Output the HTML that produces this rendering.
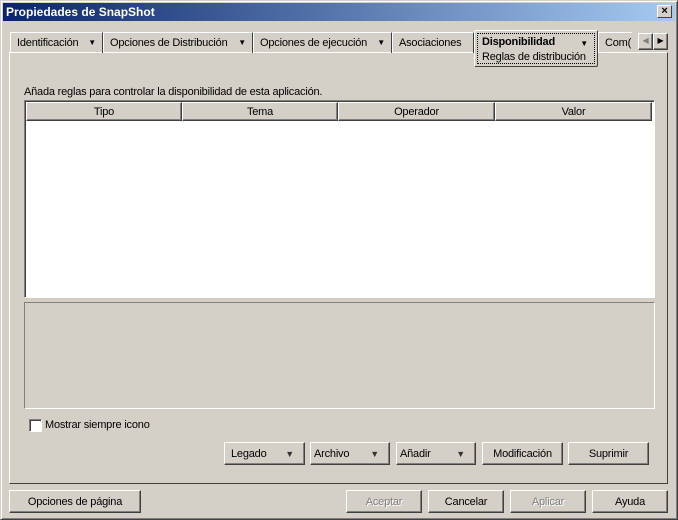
<!DOCTYPE html>
<html><head><meta charset="utf-8"><style>
*{box-sizing:border-box;margin:0;padding:0}
body{width:678px;height:520px;background:#d4d0c8;font-family:"Liberation Sans",Arial,sans-serif;font-size:11px;color:#000;position:relative;overflow:hidden;letter-spacing:-0.2px}
.a{position:absolute;white-space:nowrap}
.win{left:0;top:0;width:678px;height:520px;border:1px solid;border-color:#d4d0c8 #404040 #404040 #d4d0c8;box-shadow:inset 1px 1px #fff,inset -1px -1px #808080}
.title{left:3px;top:3px;width:672px;height:18px;background:linear-gradient(90deg,#0a246a,#a6caf0);color:#fff;font-weight:bold;font-size:12px;padding:2px 3px;letter-spacing:0}
.close{left:657px;top:5px;width:15px;height:13px;background:#d4d0c8;border:1px solid;border-color:#fff #404040 #404040 #fff;font-size:11px;line-height:10px;text-align:center;color:#000;font-weight:bold}
.tab{top:32px;height:21px;border-top:1px solid #fff;border-left:1px solid #fff;border-right:1px solid #404040;padding:4px 6px;overflow:hidden}
.arr{position:absolute;right:6px;top:5px;font-size:8px}
.panel{left:9px;top:52px;width:659px;height:432px;border:1px solid;border-color:#fff #404040 #404040 #fff}
.btn{height:23px;border:1px solid;border-color:#fff #404040 #404040 #fff;box-shadow:inset -1px -1px #808080;text-align:center;line-height:22px;background:#d4d0c8}
.dd{text-align:left;padding-left:6px}
.dd span{position:absolute;right:10px;font-size:9px;color:#333}
.hd{top:102px;height:19px;border:1px solid;border-color:#fff #404040 #404040 #fff;box-shadow:inset -1px -1px #808080;text-align:center;line-height:19px;background:#d4d0c8}
.dis{color:#808080;text-shadow:1px 1px #fff}
</style></head><body>
<div class="a win"></div>
<div class="a title">Propiedades de SnapShot</div>
<div class="a close">×</div>
<div class="a panel"></div>
<div class="a tab" style="left:10px;width:93px">Identificación <span class="arr">▼</span></div>
<div class="a tab" style="left:103px;width:150px">Opciones de Distribución <span class="arr">▼</span></div>
<div class="a tab" style="left:253px;width:139px">Opciones de ejecución <span class="arr">▼</span></div>
<div class="a tab" style="left:392px;width:82px">Asociaciones</div>
<div class="a tab" style="left:598px;width:34px;border-right:none">Com(</div>
<div class="a" style="left:474px;top:30px;width:124px;height:37px;background:#d4d0c8;border:1px solid;border-color:#fff #404040 #404040 #fff;border-radius:2px"></div>
<div class="a" style="left:477px;top:33px;width:118px;height:31px;border:1px dotted #000;padding:1px 4px;line-height:15px"><b>Disponibilidad</b><span style="position:absolute;right:6px;top:2px;font-size:8px">▼</span><br>Reglas de distribución</div>
<div class="a btn" style="left:638px;top:33px;width:15px;height:17px;line-height:14px;font-size:8px;color:#808080">◀</div>
<div class="a btn" style="left:653px;top:33px;width:15px;height:17px;line-height:14px;font-size:8px">▶</div>
<div class="a" style="left:24px;top:86px">Añada reglas para controlar la disponibilidad de esta aplicación.</div>
<div class="a" style="left:24px;top:100px;width:631px;height:198px;background:#fff;border:1px solid;border-color:#808080 #fff #fff #808080;box-shadow:inset 1px 1px #404040"></div>
<div class="a hd" style="left:26px;width:156px">Tipo</div>
<div class="a hd" style="left:182px;width:156px">Tema</div>
<div class="a hd" style="left:338px;width:157px">Operador</div>
<div class="a hd" style="left:495px;width:157px">Valor</div>
<div class="a" style="left:24px;top:302px;width:631px;height:107px;border:1px solid;border-color:#808080 #fff #fff #808080"></div>
<div class="a" style="left:29px;top:419px;width:13px;height:13px;background:#fff;border:1px solid;border-color:#808080 #fff #fff #808080;box-shadow:inset 1px 1px #404040"></div>
<div class="a" style="left:45px;top:419px">Mostrar siempre icono</div>
<div class="a btn dd" style="left:224px;top:442px;width:81px">Legado<span>▼</span></div>
<div class="a btn dd" style="left:310px;top:442px;width:80px;padding-left:3px">Archivo<span>▼</span></div>
<div class="a btn dd" style="left:396px;top:442px;width:80px;padding-left:3px">Añadir<span>▼</span></div>
<div class="a btn" style="left:482px;top:442px;width:81px">Modificación</div>
<div class="a btn" style="left:568px;top:442px;width:81px">Suprimir</div>
<div class="a btn" style="left:9px;top:490px;width:132px">Opciones de página</div>
<div class="a btn dis" style="left:346px;top:490px;width:76px">Aceptar</div>
<div class="a btn" style="left:428px;top:490px;width:76px">Cancelar</div>
<div class="a btn dis" style="left:510px;top:490px;width:76px">Aplicar</div>
<div class="a btn" style="left:592px;top:490px;width:76px">Ayuda</div>
</body></html>
